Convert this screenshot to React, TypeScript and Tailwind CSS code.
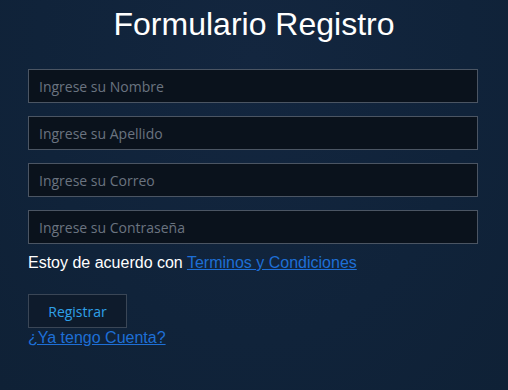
import React from "react"

const fields = [
  { id: "nombre", type: "text", placeholder: "Ingrese su Nombre" },
  { id: "apellido", type: "text", placeholder: "Ingrese su Apellido" },
  { id: "correo", type: "email", placeholder: "Ingrese su Correo" },
  { id: "password", type: "password", placeholder: "Ingrese su Contraseña" },
]

export default function App() {
  return (
    <div className="min-h-screen w-full bg-[#10223a] bg-[radial-gradient(ellipse_at_50%_15%,#13263f_0%,#10233a_60%,#0f2136_100%)] font-['Liberation_Sans',Arial,sans-serif]">
      <div className="px-[28px] pt-[4px]">
        <h1 className="text-center text-[32px] leading-[40px] text-white">Formulario Registro</h1>

        <form className="mt-[25px] w-[450px] flex flex-col gap-[13px]" onSubmit={(e) => e.preventDefault()}>
          {fields.map((f) => (
            <input
              key={f.id}
              type={f.type}
              placeholder={f.placeholder}
              className="h-[34px] w-full border border-[#4b5563] bg-[#0a121c] px-[10px] text-[14px] text-white font-['Open_Sans',sans-serif] placeholder:text-[#6b7480] outline-none"
            />
          ))}
        </form>

        <p className="mt-[9px] text-[16px] leading-[20px] text-white">
          Estoy de acuerdo con{" "}
          <a href="#" className="text-[#1e6fd6] underline">
            Terminos y Condiciones
          </a>
        </p>

        <button
          type="button"
          className="mt-[21px] block h-[34px] w-[99px] border border-[#3a4656] bg-[#0e1b2c] text-[14px] text-[#2ea0e8] font-['Open_Sans',sans-serif]"
        >
          Registrar
        </button>
        <a href="#" className="block text-[16px] leading-[20px] text-[#1e6fd6] underline">
          ¿Ya tengo Cuenta?
        </a>
      </div>
    </div>
  )
}
